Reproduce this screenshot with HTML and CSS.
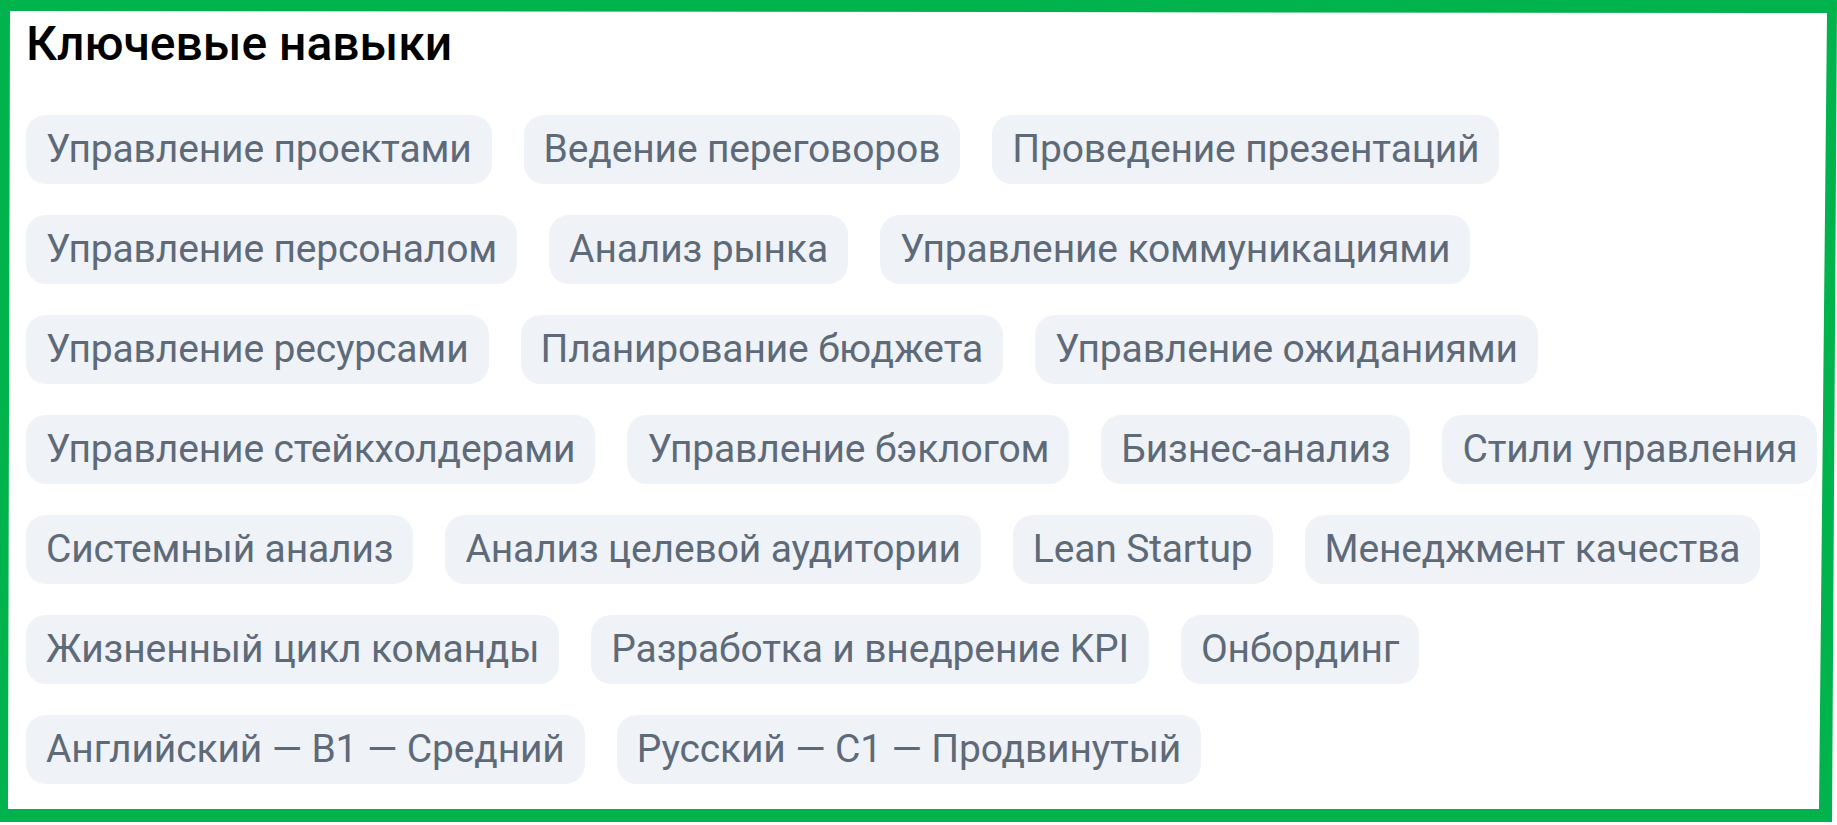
FILE: index.html
```html
<!DOCTYPE html>
<html lang="ru">
<head>
<meta charset="utf-8">
<title>Ключевые навыки</title>
<link rel="stylesheet" href="styles.css">
</head>
<body>
<section class="skills">
  <h2 class="skills-title">Ключевые навыки</h2>
  <ul class="chips">
    <li class="chip">Управление проектами</li>
    <li class="chip">Ведение переговоров</li>
    <li class="chip">Проведение презентаций</li>
    <li class="chip">Управление персоналом</li>
    <li class="chip">Анализ рынка</li>
    <li class="chip">Управление коммуникациями</li>
    <li class="chip">Управление ресурсами</li>
    <li class="chip">Планирование бюджета</li>
    <li class="chip">Управление ожиданиями</li>
    <li class="chip">Управление стейкхолдерами</li>
    <li class="chip">Управление бэклогом</li>
    <li class="chip">Бизнес-анализ</li>
    <li class="chip">Стили управления</li>
    <li class="chip">Системный анализ</li>
    <li class="chip">Анализ целевой аудитории</li>
    <li class="chip">Lean Startup</li>
    <li class="chip">Менеджмент качества</li>
    <li class="chip">Жизненный цикл команды</li>
    <li class="chip">Разработка и внедрение KPI</li>
    <li class="chip">Онбординг</li>
    <li class="chip">Английский — B1 — Средний</li>
    <li class="chip">Русский — C1 — Продвинутый</li>
  </ul>
  <svg class="frame" width="1837" height="825" viewBox="0 0 1837 825" aria-hidden="true">
    <path fill-rule="evenodd" fill="#00b34c" d="M0 0 L1837 0 L1832 822 L0 822 Z M10 11 L1827 13 L1819 809 L8 809 Z"/>
  </svg>
</section>
</body>
</html>
```

FILE: styles.css
```css
html, body {
  margin: 0;
  padding: 0;
  background: #ffffff;
}

.skills {
  position: relative;
  width: 1837px;
  height: 825px;
  box-sizing: border-box;
  padding: 16px 8px 0 26px;
  font-family: Roboto, "Liberation Sans", sans-serif;
}

.skills-title {
  margin: 0;
  font-size: 48px;
  line-height: 56px;
  font-weight: 500;
  color: #000000;
}

.chips {
  list-style: none;
  margin: 43px 0 0 0;
  padding: 0;
  display: flex;
  flex-wrap: wrap;
  column-gap: 32px;
  row-gap: 31px;
}

.chip {
  height: 69px;
  line-height: 69px;
  padding: 0 20px;
  border-radius: 20px;
  background: #eff2f7;
  color: #5e6a78;
  font-size: 39px;
  letter-spacing: -0.15px;
  white-space: nowrap;
}

.frame {
  position: absolute;
  left: 0;
  top: 0;
  pointer-events: none;
}
```
